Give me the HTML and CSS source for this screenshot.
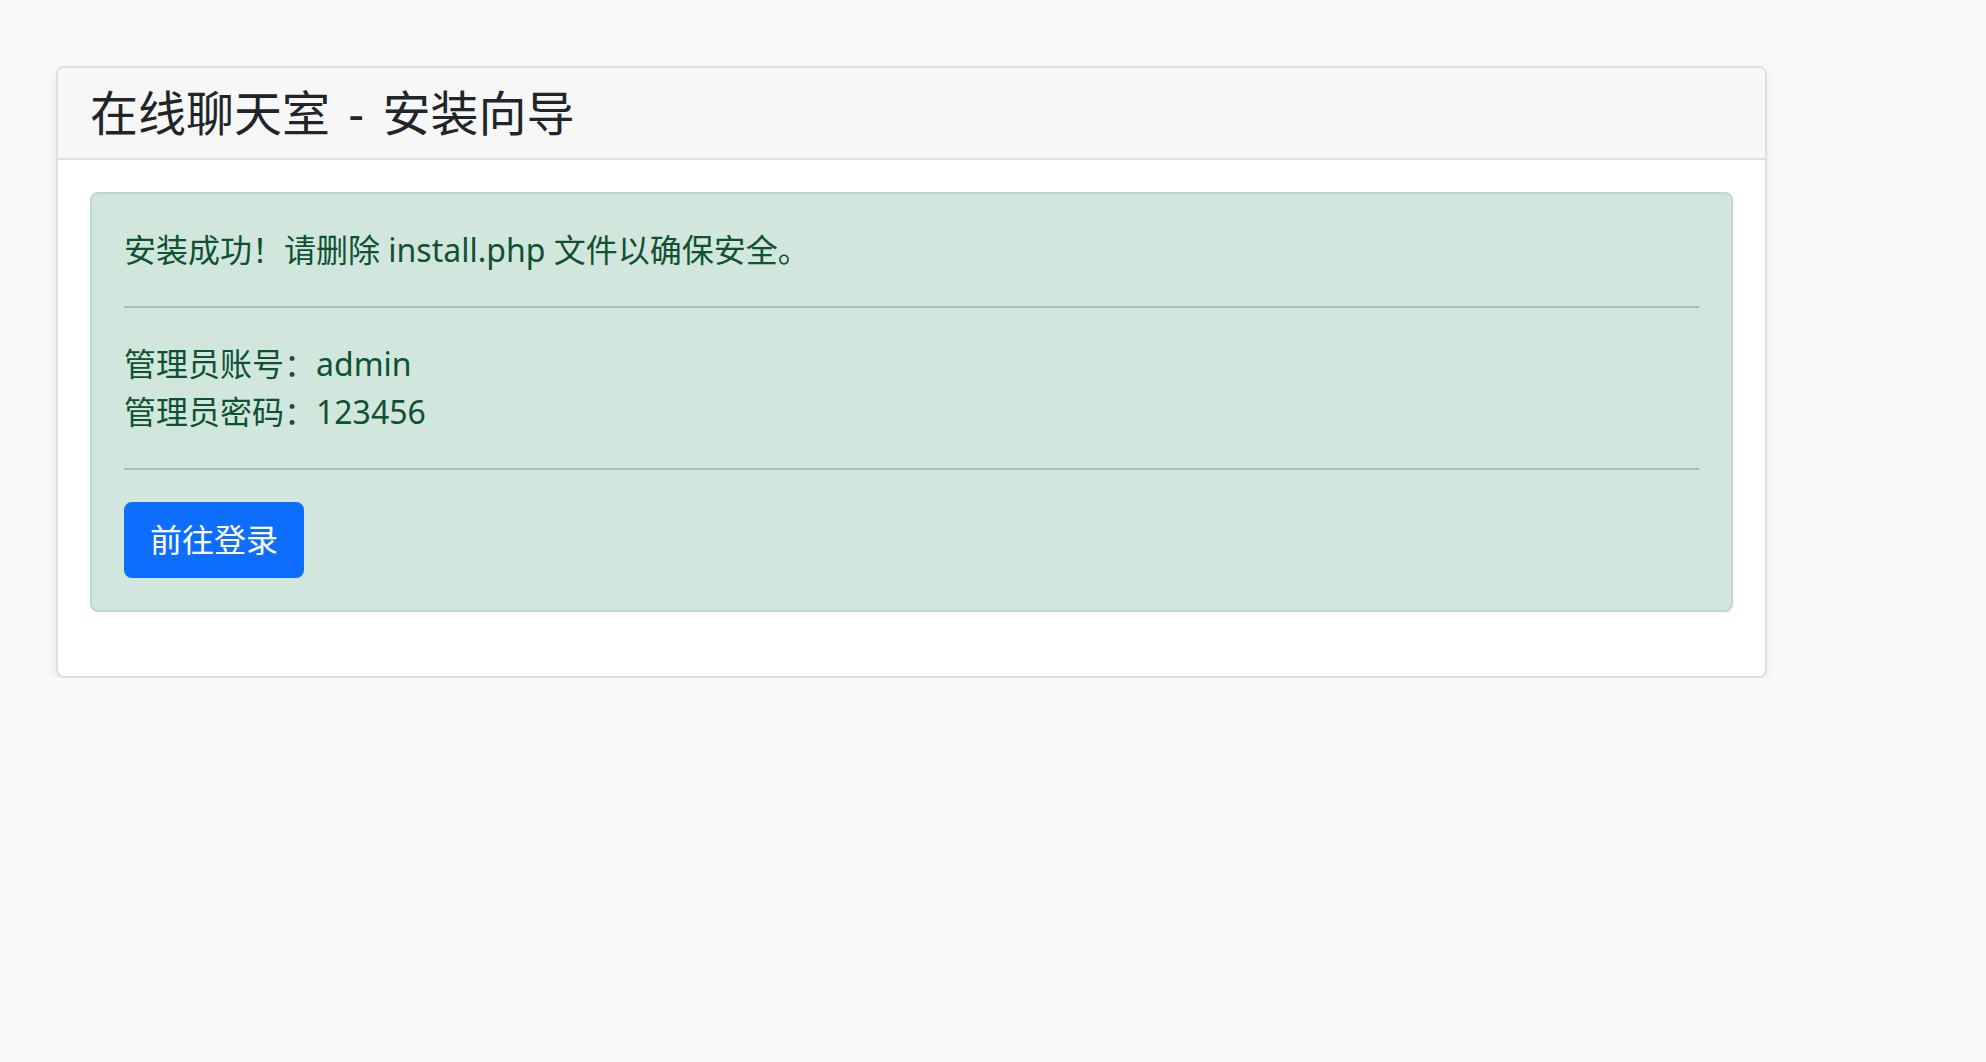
FILE: index.html
```html
<!DOCTYPE html>
<html lang="zh-CN">
<head>
<meta charset="utf-8">
<title>在线聊天室 - 安装向导</title>
<link rel="stylesheet" href="styles.css">
</head>
<body>
<div class="page">
  <div class="card">
    <div class="card-header">
      <h4 class="title">在线聊天室 - 安装向导</h4>
    </div>
    <div class="card-body">
      <div class="alert">
        <p class="msg">安装成功！请删除 install.php 文件以确保安全。</p>
        <hr class="rule">
        <p class="msg">管理员账号：admin<br>管理员密码：123456</p>
        <hr class="rule">
        <a class="btn" href="#">前往登录</a>
      </div>
    </div>
  </div>
</div>
</body>
</html>
```

FILE: styles.css
```css
* { box-sizing: border-box; }
html, body {
  margin: 0;
  padding: 0;
  background: #f8f9fa;
  font-family: "Segoe UI", "Noto Sans", "Noto Sans CJK SC", sans-serif;
  color: #212529;
  font-size: 32px;
  line-height: 1.5;
}
.page {
  padding: 66px 0 0 56px;
}
.card {
  width: 1711px;
  background: #fff;
  border: 2px solid #dfdfdf;
  border-radius: 8px;
  box-shadow: 0 4px 8px rgba(0,0,0,.075);
  overflow: hidden;
}
.card-header {
  background: #f7f7f7;
  border-bottom: 2px solid #dfdfdf;
  padding: 16px 32px;
}
.title {
  margin: 0;
  font-size: 48px;
  font-weight: 400;
  line-height: 1.2;
  color: #212529;
  word-spacing: 6px;
}
.card-body {
  padding: 32px;
}
.alert {
  background: #d1e7dd;
  border: 2px solid #badbcc;
  border-radius: 8px;
  color: #0f5132;
  padding: 32px;
  margin-bottom: 32px;
}
.msg {
  margin: 0;
}
.rule {
  border: 0;
  border-top: 2px solid rgba(15,81,50,.25);
  margin: 32px 0;
  height: 0;
}
.btn {
  display: inline-block;
  background: #0d6efd;
  border: 2px solid #0d6efd;
  color: #fff;
  text-decoration: none;
  padding: 12px 24px;
  border-radius: 8px;
  line-height: 1.5;
  font-size: 32px;
  vertical-align: top;
}
```
